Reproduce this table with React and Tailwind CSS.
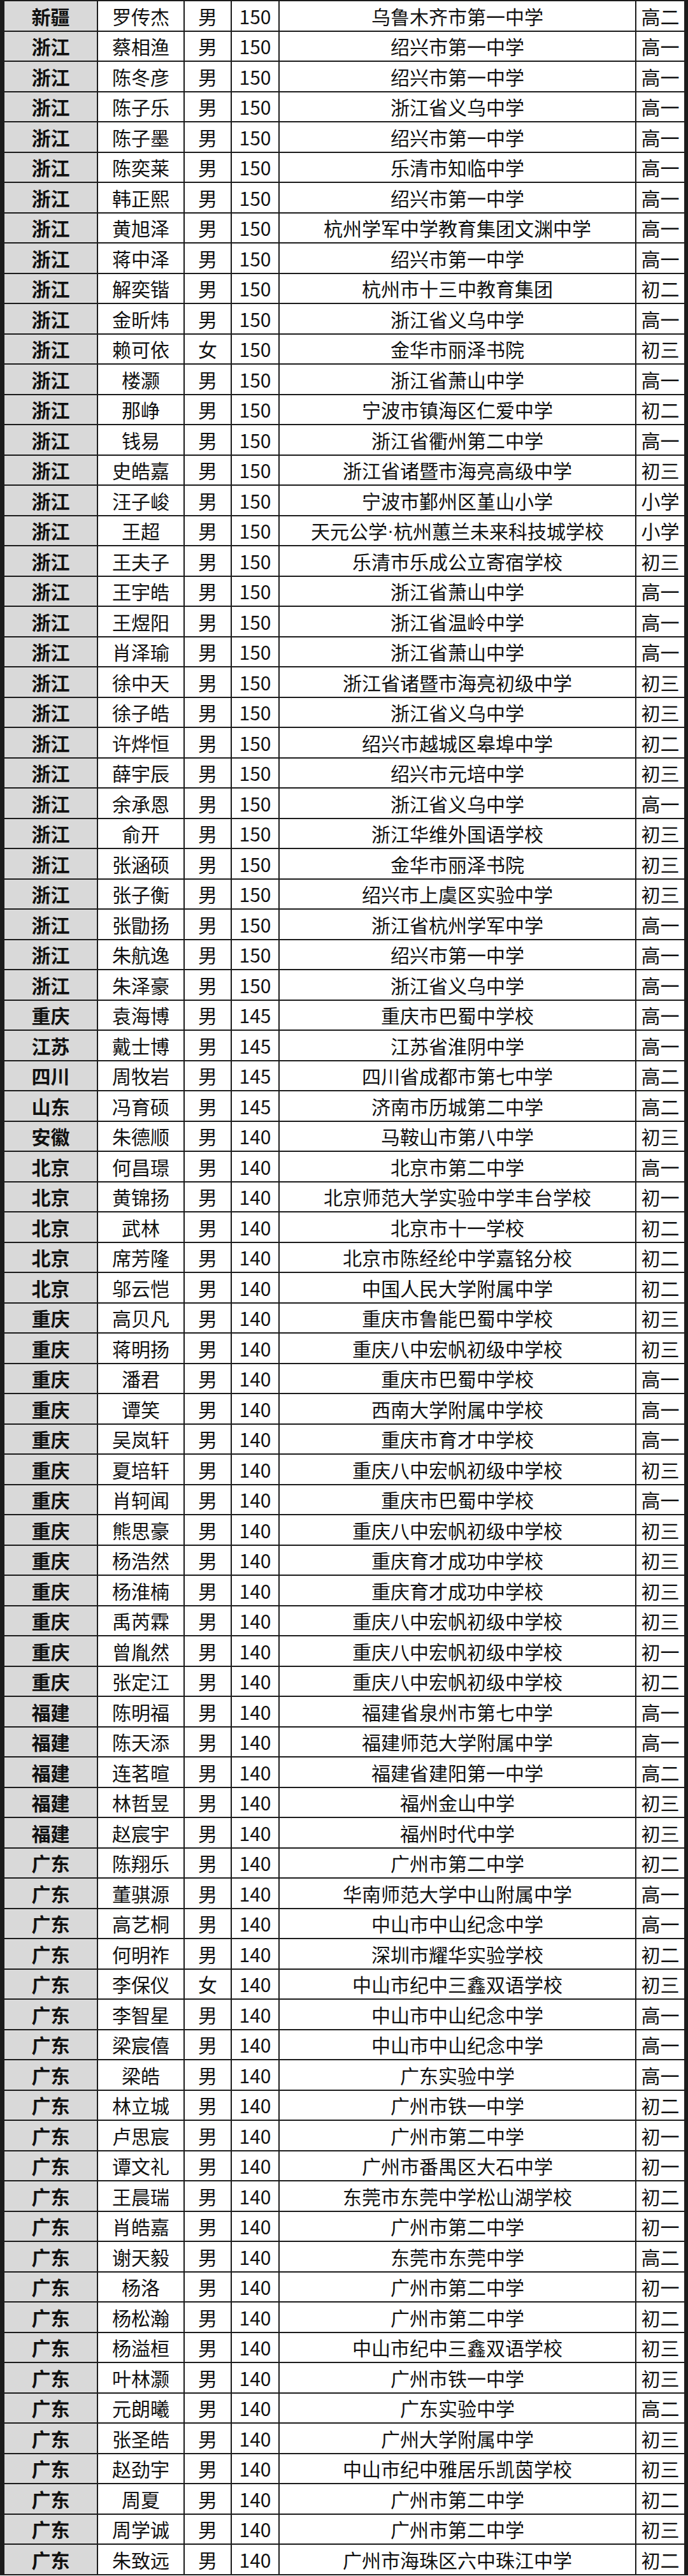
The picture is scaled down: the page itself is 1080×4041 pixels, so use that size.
const rows = [
  "新疆|罗传杰|男|150|乌鲁木齐市第一中学|高二",
  "浙江|蔡相渔|男|150|绍兴市第一中学|高一",
  "浙江|陈冬彦|男|150|绍兴市第一中学|高一",
  "浙江|陈子乐|男|150|浙江省义乌中学|高一",
  "浙江|陈子墨|男|150|绍兴市第一中学|高一",
  "浙江|陈奕莱|男|150|乐清市知临中学|高一",
  "浙江|韩正熙|男|150|绍兴市第一中学|高一",
  "浙江|黄旭泽|男|150|杭州学军中学教育集团文渊中学|高一",
  "浙江|蒋中泽|男|150|绍兴市第一中学|高一",
  "浙江|解奕锴|男|150|杭州市十三中教育集团|初二",
  "浙江|金昕炜|男|150|浙江省义乌中学|高一",
  "浙江|赖可依|女|150|金华市丽泽书院|初三",
  "浙江|楼灏|男|150|浙江省萧山中学|高一",
  "浙江|那峥|男|150|宁波市镇海区仁爱中学|初二",
  "浙江|钱易|男|150|浙江省衢州第二中学|高一",
  "浙江|史皓嘉|男|150|浙江省诸暨市海亮高级中学|初三",
  "浙江|汪子峻|男|150|宁波市鄞州区堇山小学|小学",
  "浙江|王超|男|150|天元公学·杭州蕙兰未来科技城学校|小学",
  "浙江|王夫子|男|150|乐清市乐成公立寄宿学校|初三",
  "浙江|王宇皓|男|150|浙江省萧山中学|高一",
  "浙江|王煜阳|男|150|浙江省温岭中学|高一",
  "浙江|肖泽瑜|男|150|浙江省萧山中学|高一",
  "浙江|徐中天|男|150|浙江省诸暨市海亮初级中学|初三",
  "浙江|徐子皓|男|150|浙江省义乌中学|初三",
  "浙江|许烨恒|男|150|绍兴市越城区皋埠中学|初二",
  "浙江|薛宇辰|男|150|绍兴市元培中学|初三",
  "浙江|余承恩|男|150|浙江省义乌中学|高一",
  "浙江|俞开|男|150|浙江华维外国语学校|初三",
  "浙江|张涵硕|男|150|金华市丽泽书院|初三",
  "浙江|张子衡|男|150|绍兴市上虞区实验中学|初三",
  "浙江|张勖扬|男|150|浙江省杭州学军中学|高一",
  "浙江|朱航逸|男|150|绍兴市第一中学|高一",
  "浙江|朱泽豪|男|150|浙江省义乌中学|高一",
  "重庆|袁海博|男|145|重庆市巴蜀中学校|高一",
  "江苏|戴士博|男|145|江苏省淮阴中学|高一",
  "四川|周牧岩|男|145|四川省成都市第七中学|高二",
  "山东|冯育硕|男|145|济南市历城第二中学|高二",
  "安徽|朱德顺|男|140|马鞍山市第八中学|初三",
  "北京|何昌璟|男|140|北京市第二中学|高一",
  "北京|黄锦扬|男|140|北京师范大学实验中学丰台学校|初一",
  "北京|武林|男|140|北京市十一学校|初二",
  "北京|席芳隆|男|140|北京市陈经纶中学嘉铭分校|初二",
  "北京|邬云恺|男|140|中国人民大学附属中学|初二",
  "重庆|高贝凡|男|140|重庆市鲁能巴蜀中学校|初三",
  "重庆|蒋明扬|男|140|重庆八中宏帆初级中学校|初三",
  "重庆|潘君|男|140|重庆市巴蜀中学校|高一",
  "重庆|谭笑|男|140|西南大学附属中学校|高一",
  "重庆|吴岚轩|男|140|重庆市育才中学校|高一",
  "重庆|夏培轩|男|140|重庆八中宏帆初级中学校|初三",
  "重庆|肖轲闻|男|140|重庆市巴蜀中学校|高一",
  "重庆|熊思豪|男|140|重庆八中宏帆初级中学校|初三",
  "重庆|杨浩然|男|140|重庆育才成功中学校|初三",
  "重庆|杨淮楠|男|140|重庆育才成功中学校|初三",
  "重庆|禹芮霖|男|140|重庆八中宏帆初级中学校|初三",
  "重庆|曾胤然|男|140|重庆八中宏帆初级中学校|初一",
  "重庆|张定江|男|140|重庆八中宏帆初级中学校|初二",
  "福建|陈明福|男|140|福建省泉州市第七中学|高一",
  "福建|陈天添|男|140|福建师范大学附属中学|高一",
  "福建|连茗暄|男|140|福建省建阳第一中学|高二",
  "福建|林哲昱|男|140|福州金山中学|初三",
  "福建|赵宸宇|男|140|福州时代中学|初三",
  "广东|陈翔乐|男|140|广州市第二中学|初二",
  "广东|董骐源|男|140|华南师范大学中山附属中学|高一",
  "广东|高艺桐|男|140|中山市中山纪念中学|高一",
  "广东|何明祚|男|140|深圳市耀华实验学校|初二",
  "广东|李保仪|女|140|中山市纪中三鑫双语学校|初三",
  "广东|李智星|男|140|中山市中山纪念中学|高一",
  "广东|梁宸僖|男|140|中山市中山纪念中学|高一",
  "广东|梁皓|男|140|广东实验中学|高一",
  "广东|林立城|男|140|广州市铁一中学|初二",
  "广东|卢思宸|男|140|广州市第二中学|初一",
  "广东|谭文礼|男|140|广州市番禺区大石中学|初一",
  "广东|王晨瑞|男|140|东莞市东莞中学松山湖学校|初二",
  "广东|肖皓嘉|男|140|广州市第二中学|初一",
  "广东|谢天毅|男|140|东莞市东莞中学|高二",
  "广东|杨洛|男|140|广州市第二中学|初一",
  "广东|杨松瀚|男|140|广州市第二中学|初二",
  "广东|杨溢桓|男|140|中山市纪中三鑫双语学校|初三",
  "广东|叶林灏|男|140|广州市铁一中学|初三",
  "广东|元朗曦|男|140|广东实验中学|高二",
  "广东|张圣皓|男|140|广州大学附属中学|初三",
  "广东|赵劲宇|男|140|中山市纪中雅居乐凯茵学校|初三",
  "广东|周夏|男|140|广州市第二中学|初二",
  "广东|周学诚|男|140|广州市第二中学|初三",
  "广东|朱致远|男|140|广州市海珠区六中珠江中学|初二",
];

const cell = "flex items-center justify-center border-r-2 border-[#1c1c1c] whitespace-nowrap";

// the middle dot must stay narrow, the CJK font draws it full width
function School({ text }) {
  const parts = text.split("·");
  if (parts.length === 1) return text;
  return (
    <>
      {parts[0]}
      <span className="font-['Liberation_Sans',sans-serif]">·</span>
      {parts[1]}
    </>
  );
}

export default function App() {
  return (
    <div className="w-[1080px] bg-white text-[#111] font-[family-name:'Noto_Sans_CJK_SC','Noto_Sans',sans-serif] text-[30px] leading-none">
      <div className="border-t-2 border-l-[7px] border-r-[6px] border-[#1c1c1c]">
        {rows.map((line, i) => {
          const [prov, name, sex, score, school, grade] = line.split("|");
          return (
            <div
              key={i}
              className="grid grid-cols-[147px_136px_74px_75px_560px_75px] h-[47.5px] border-b-2 border-[#1c1c1c]"
            >
              <div className={cell + " bg-[#d9d9d9] font-bold"}>{prov}</div>
              <div className={cell}>{name}</div>
              <div className={cell}>{sex}</div>
              <div className={cell}>{score}</div>
              <div className={cell}>
                <School text={school} />
              </div>
              <div className="flex items-center justify-center whitespace-nowrap">{grade}</div>
            </div>
          );
        })}
      </div>
    </div>
  );
}
